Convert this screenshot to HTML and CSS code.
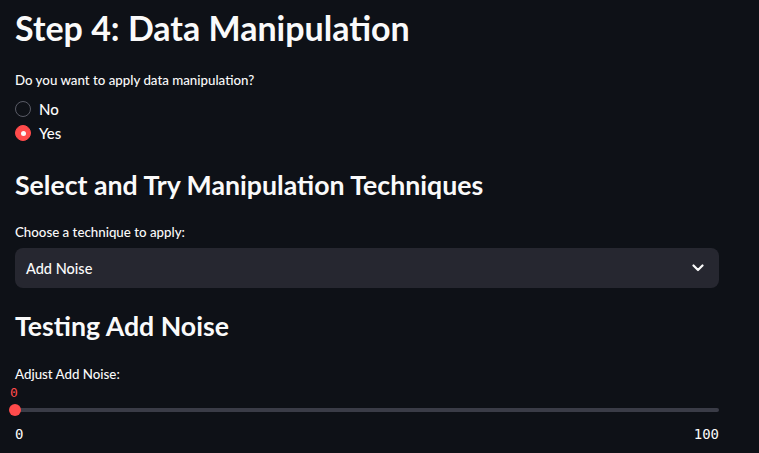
FILE: index.html
```html
<!DOCTYPE html>
<html>
<head>
<meta charset="utf-8">
<link rel="stylesheet" href="styles.css">
</head>
<body>
<main class="main">
  <h1 class="title">Step 4: Data Manipulation</h1>
  <div class="widget radio-widget">
    <div class="label">Do you want to apply data manipulation?</div>
    <div class="radio-group">
      <label class="radio"><span class="dot"></span><span class="radio-text">No</span></label>
      <label class="radio checked"><span class="dot"></span><span class="radio-text">Yes</span></label>
    </div>
  </div>
  <h2 class="subtitle first">Select and Try Manipulation Techniques</h2>
  <div class="widget select-widget">
    <div class="label">Choose a technique to apply:</div>
    <div class="select">
      <span class="select-value">Add Noise</span>
      <svg class="chevron" width="12" height="8" viewBox="0 0 12 8"><path d="M1.5 1.5 L6 6 L10.5 1.5" fill="none" stroke="#fafafa" stroke-width="2.2" stroke-linecap="round" stroke-linejoin="round"/></svg>
    </div>
  </div>
  <h2 class="subtitle second">Testing Add Noise</h2>
  <div class="widget slider-widget">
    <div class="label">Adjust Add Noise:</div>
    <div class="slider">
      <div class="slider-value">0</div>
      <div class="track"><span class="thumb"></span></div>
      <div class="ticks"><span>0</span><span>100</span></div>
    </div>
  </div>
</main>
</body>
</html>
```
FILE: styles.css
```css
html, body {
  margin: 0;
  padding: 0;
  background: #0e1117;
  color: #fafafa;
  font-family: "Lato", "Noto Sans", sans-serif;
}
.main {
  width: 704px;
  padding: 0 40px 0 15px;
}
.title {
  margin: 0;
  padding-top: 6px;
  font-size: 34px;
  line-height: 44px;
  font-weight: 700;
}
.widget .label {
  font-size: 13.3px;
  line-height: 18px;
  font-weight: 500;
}
.radio-widget {
  margin-top: 21px;
}
.radio-group {
  display: flex;
  flex-direction: column;
  gap: 8px;
  margin-top: 12px;
}
.radio {
  display: flex;
  align-items: center;
  gap: 8px;
  height: 16px;
  font-size: 15px;
  font-weight: 500;
}
.dot {
  width: 14px;
  height: 14px;
  border-radius: 50%;
  border: 1px solid #595b66;
  box-sizing: content-box;
  position: relative;
}
.radio.checked .dot {
  background: #ff4b4b;
  border-color: #ff4b4b;
}
.radio.checked .dot::after {
  content: "";
  position: absolute;
  left: 5px;
  top: 5px;
  width: 5px;
  height: 5px;
  border-radius: 50%;
  background: #fafafa;
}
.subtitle {
  margin: 0;
  font-size: 26.7px;
  line-height: 34px;
  font-weight: 700;
}
.subtitle.first {
  margin-top: 27px;
}
.select-widget {
  margin-top: 21px;
}
.select {
  margin-top: 7px;
  height: 40px;
  border-radius: 8px;
  background: #262730;
  display: flex;
  align-items: center;
  justify-content: space-between;
  padding: 0 15px 0 11px;
  font-size: 14.5px;
  font-weight: 500;
}
.subtitle.second {
  margin-top: 21px;
}
.slider-widget {
  margin-top: 22px;
}
.slider {
  position: relative;
}
.slider-value {
  font-family: "DejaVu Sans Mono", monospace;
  font-size: 13px;
  line-height: 14px;
  color: #ff4b4b;
  margin-left: -5px;
  margin-top: 3px;
}
.track {
  margin-top: 8px;
  height: 4px;
  border-radius: 2px;
  background: #3a3c47;
  position: relative;
}
.thumb {
  position: absolute;
  left: -6px;
  top: -4px;
  width: 12px;
  height: 12px;
  border-radius: 50%;
  background: #ff4b4b;
}
.ticks {
  display: flex;
  justify-content: space-between;
  margin-top: 14px;
  font-family: "DejaVu Sans Mono", monospace;
  font-size: 14px;
  line-height: 16px;
}
```
